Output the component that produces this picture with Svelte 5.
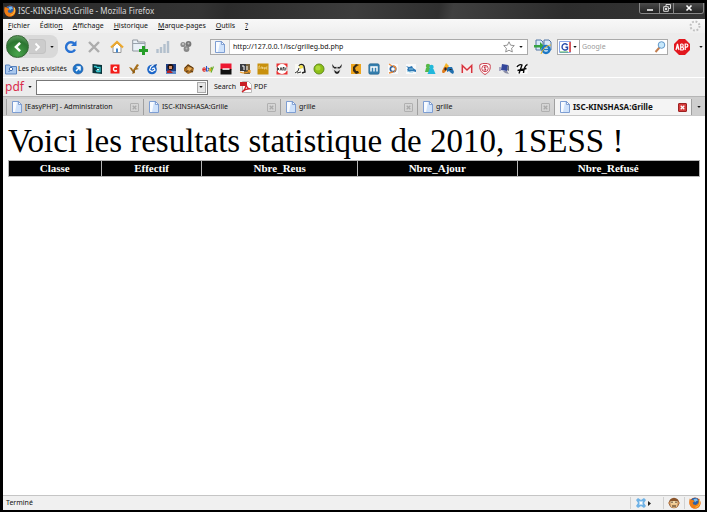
<script>
    let address = $state("http://127.0.0.1/isc/grilleg.bd.php");
    let query = $state("");
    let pdfQuery = $state("");
    let active = $state(4);

    const menus = [
        { key: "F", rest: "ichier" },
        { before: "Éditio", key: "n", rest: "" },
        { key: "A", rest: "ffichage" },
        { key: "H", rest: "istorique" },
        { key: "M", rest: "arque-pages" },
        { key: "O", rest: "utils" },
        { key: "?", rest: "" }
    ];

    const tabs = [
        "[EasyPHP] - Administration",
        "ISC-KINSHASA:Grille",
        "grille",
        "grille",
        "ISC-KINSHASA:Grille"
    ];

    const columns = [
        { name: "Classe", width: 13.4 },
        { name: "Effectif", width: 14.6 },
        { name: "Nbre_Reus", width: 22.5 },
        { name: "Nbre_Ajour", width: 23.1 },
        { name: "Nbre_Refusé", width: 26.4 }
    ];

    const bookmarks = [
        "arrow", "teal", "c", "bird", "swirl", "portrait", "tiger", "ebay", "sg",
        "amazon", "fnac", "darty", "penguin", "lime", "mask", "phone", "m", "orbit",
        "fish", "msn", "gamepad", "gmail", "shield", "computer", "script"
    ];
</script>

{#snippet page()}
    <svg class="page" viewBox="0 0 10 12" aria-hidden="true">
        <path d="M.5.5h6l3 3v8h-9z" fill="#cfe2fb" stroke="#7e9ed2" />
        <path d="M1 1h4L3 11H1z" fill="#f8fbff" />
        <path d="M6.500.5v3h3z" fill="#fff" stroke="#6d8fc9" stroke-width=".8" />
    </svg>
{/snippet}

{#snippet caret()}
    <svg class="caret" viewBox="0 0 5 3" aria-hidden="true"><path d="M0 0h5L2.5 3z" fill="#111" /></svg>
{/snippet}

{#snippet firefox()}
    <svg class="fox" viewBox="0 0 12 12" aria-hidden="true">
        <circle cx="6" cy="6" r="5.5" fill="#d9560f" />
        <circle cx="6" cy="4.6" r="3.9" fill="#2d62a8" />
        <path d="M4.500 2.200l3-.8 1.500 2-2 .8-1 1.200z" fill="#7fbdea" />
        <path d="M.8 1.500l1.500 1.600 2-.2 1 1.700-1.600 1.200.7 1.700 2.500.6 2.500-2L10 1.500C13 7 10.800 11.500 6 11.500 1.500 11.500-.8 6.500.8 1.500z" fill="#ee7d16" />
        <path d="M10.300 3c1.200 3-.3 6.500-3.800 7.200" fill="none" stroke="#ffd04a" />
    </svg>
{/snippet}

{#snippet bookmark(name)}
    <svg class="favicon" viewBox="0 0 12 12" aria-hidden="true">
        {#if name == "arrow"}
            <circle cx="6" cy="6" r="5" fill="#1e75c9" stroke="#1b4f9a" stroke-width=".6" />
            <path d="M4 8l3.500-3.500M4.500 4H8v3.500" fill="none" stroke="#fff" stroke-width="1.5" />
        {:else if name == "teal"}
            <path d="M1.500 1l9.500 1v9l-9.500-1z" fill="#08333a" />
            <path d="M3 3.500h2l1 1h3v4H6l-1-1.500" fill="none" stroke="#35c6d0" stroke-width="1.300" />
            <path d="M6 6h2v1.500H6z" fill="#d9fbfb" />
        {:else if name == "c"}
            <path d="M1.500 1.500h9v9h-9z" fill="#f21b18" />
            <path d="M8 4.500C6 3.500 4.500 4.200 4.500 6S6 8.500 8 7.500" fill="none" stroke="#fff" stroke-width="1.400" />
        {:else if name == "bird"}
            <path d="M1 4l3 1 1 2 4-6 2 1-2 3 2 1-4 1v3l-3 1 1-2-2-2z" fill="#a66f1c" />
            <path d="M3 6l2 3 3-3-3 4z" fill="#5c3c15" />
        {:else if name == "swirl"}
            <circle cx="6" cy="6.500" r="4.800" fill="#1c66c8" />
            <path d="M9.500 1L5 3.500 3.500 7 6 8.500 9 7 8 5 6 6" fill="none" stroke="#fff" stroke-width="1.100" />
            <path d="M7 2l4-1-1 3z" fill="#1550a5" />
        {:else if name == "portrait"}
            <path d="M1 1h10v10H1z" fill="#1d3f86" />
            <path d="M1 8h10v3H1z" fill="#5f8bc9" />
            <circle cx="5.500" cy="4" r="3" fill="#23120c" />
            <path d="M4 3h3v3H4z" fill="#d38b65" />
            <path d="M2 8l3-1 3 3H2z" fill="#b52223" />
        {:else if name == "tiger"}
            <path d="M1 5l4-4 6 4-1 4-5 2-4-3z" fill="#a46a22" />
            <path d="M2 5l3-3 5 3M3 9l3-2 4 2" fill="none" stroke="#4f3519" />
            <path d="M5 4l4 1-2 3-3-1z" fill="#e5ac57" />
        {:else if name == "ebay"}
            <path d="M.8 6.500h2.500C3.300 4 .8 4.500.8 6.500c0 2 2 2 2.800 1" fill="none" stroke="#e12a25" stroke-width="1.100" />
            <path d="M4.500 3v5h1c2 0 2-3 0-3" fill="none" stroke="#2556c6" stroke-width="1.100" />
            <path d="M7 5.500h1.500V8H7V6.500" fill="none" stroke="#e1ad10" />
            <path d="M9 4l1 3 1.500-3.500M10 7L9 9.500" fill="none" stroke="#69ab25" stroke-width="1.200" />
        {:else if name == "sg"}
            <path d="M.5.5h11v6H.5z" fill="#ec1731" />
            <path d="M.5 6h11v5.500H.5z" fill="#111" />
            <path d="M2.500 5.300h7v1.500h-7z" fill="#fff" />
        {:else if name == "amazon"}
            <path d="M1 1h6v7H1z" fill="#393b40" />
            <path d="M7 1h4v10H5V8h2z" fill="#77633e" />
            <path d="M3 3h2v4M8 3v4" fill="none" stroke="#fff" />
            <path d="M1 9c4 2 7 1 10-1M9 7.500h2V10" fill="none" stroke="#ef9720" stroke-width="1.200" />
        {:else if name == "fnac"}
            <path d="M.5.5h11v11H.5z" fill="#c8900d" />
            <path d="M2 6V3h1M4 6V4h1.500v2M7 4v2h1V4M10.500 4H9.200v2h1.300" fill="none" stroke="#f7e3a5" stroke-width=".7" />
        {:else if name == "darty"}
            <path d="M.5.5h11v11H.5z" fill="#eb3030" />
            <circle cx="6" cy="6" r="5" fill="#fff" />
            <path d="M.5 4h11v4H.5z" fill="#fff" />
            <path d="M1.500 4.500v3L3 6 1.500 4.500M4 7.500l1-3 1 3M7 7.500v-3h1V6l.5 1.500M9 4.500l.8 1 .8-1M9.800 5.500v2" fill="none" stroke="#161616" stroke-width=".8" />
        {:else if name == "penguin"}
            <path d="M1 1h10v10H1z" fill="#f8f8f4" />
            <path d="M5 3c1-2 4-2 5 0l1 6-3 1" fill="none" stroke="#222" stroke-width="1.500" />
            <path d="M5 3l2-1 2 1v2L6 6z" fill="#f5e44d" />
            <path d="M1 10l3-2 1-3M3 10l4-1" fill="none" stroke="#333" />
        {:else if name == "lime"}
            <circle cx="6" cy="6" r="5" fill="#8dbf18" stroke="#608b1c" />
            <circle cx="5" cy="5" r="2.500" fill="#add93a" />
        {:else if name == "mask"}
            <path d="M1 1l2 2h6l2-2-1 6-3 4H5L1 7z" fill="#ddd" />
            <path d="M1 1l2.500 3L2 5zM11 1L8.500 4 10 5zM3 4h2.500v1.500H3zM6.500 4H9v1.500H6.500zM3 7l3 2 3-2-1 3-2 1-2-1z" fill="#222" />
        {:else if name == "phone"}
            <path d="M1 1h10v10H1z" fill="#eda51e" />
            <path d="M9 2L6 1 3 4v4l3 3 3-1-1-2H6L5 5l2-2z" fill="#372a17" />
        {:else if name == "m"}
            <rect x=".8" y=".8" width="10.400" height="10.400" rx="1.500" fill="#357fae" stroke="#205e87" stroke-width=".6" />
            <path d="M3 8.500V4h6v4.500M6 4v4.500" fill="none" stroke="#fff" stroke-width="1.400" />
        {:else if name == "orbit"}
            <path d="M1 1h10v10H1z" fill="#fafafa" />
            <circle cx="6" cy="6" r="2.700" fill="#fff" stroke="#285f9e" stroke-width="1.700" />
            <path d="M2 1l3 2M2 10l4-1M6 3c3 0 4 4 1 6" fill="none" stroke="#ee8a37" stroke-width="1.300" />
        {:else if name == "fish"}
            <path d="M1 1h10v10H1z" fill="#fafafa" />
            <path d="M1 3l3 1 3-1 1 2 3 2v2L7 8 4 9 2 7l1-2z" fill="#2b76b3" />
            <path d="M4 6h4M2 8l3 1h3" fill="none" stroke="#8cc7e2" />
        {:else if name == "msn"}
            <circle cx="4" cy="3" r="2.200" fill="#58b947" />
            <path d="M1 9l1-4h4l1 4z" fill="#55b94a" />
            <circle cx="7.500" cy="4" r="2.200" fill="#22b9da" />
            <path d="M3.500 11l2-5h4l2 5z" fill="#21b7dc" />
        {:else if name == "gamepad"}
            <path d="M4 0l3 3-2 3-3-2z" fill="#f6b424" />
            <path d="M0 8l2-4h5l1 4-3-1-3 3H.5z" fill="#e07a18" />
            <path d="M5 6l1-2h4l2 5-1 2-2-1-2-2-2 1z" fill="#216fae" />
            <path d="M2 6h3M3.500 4.500v3M7.500 6.500h2" stroke="#242424" stroke-width="1.200" />
        {:else if name == "gmail"}
            <path d="M1 2h10v8H1z" fill="#f8eded" />
            <path d="M1.300 10V2.500L6 7l4.700-4.500V10" fill="none" stroke="#d8333d" stroke-width="1.500" />
        {:else if name == "shield"}
            <path d="M1 1.500C4 0 8 0 11 1.500c1 5-1 8-5 10C2 9.500 0 6 1 1.500z" fill="#fff" stroke="#c93b49" />
            <circle cx="6" cy="5.500" r="3.200" fill="none" stroke="#d04553" />
            <path d="M7.500 4H5l2 3H4.500" fill="none" stroke="#bc2638" />
        {:else if name == "computer"}
            <path d="M4 1l6 1-1 6-6-1z" fill="#33469b" />
            <path d="M5 8l4 0 2 3-4-1z" fill="#8a8da5" />
            <path d="M10 2l1 1v5L9 7z" fill="#6a7080" />
            <path d="M1 4h2v4H1z" fill="#aaa9c2" />
        {:else}
            <path d="M.5 1h11v10H.5z" fill="#fafafa" />
            <path d="M1 4c1-2 4-3 5-2L3 10.500M11.500 1.500C9 2 7.500 7 7.500 10M1.500 7.500l9-2" fill="none" stroke="#080808" stroke-width="1.400" />
        {/if}
    </svg>
{/snippet}

<div class="window">
    <header class="titlebar">
        {@render firefox()}
        <span class="title">ISC-KINSHASA:Grille - Mozilla Firefox</span>
        <div class="controls">
            <button class="minimize" aria-label="Réduire"><svg viewBox="0 0 8 8"><path d="M1 6h6" stroke="#fff" stroke-width="1.600" /></svg></button>
            <button aria-label="Restaurer"><svg viewBox="0 0 8 8"><path d="M3 2.500v-2h4.500v4h-2M.7 2.700h4.600v4.600H.7z" fill="none" stroke="#ddd" /><path d="M2 4h2v2H2z" fill="#ddd" /></svg></button>
            <button class="close" aria-label="Fermer"><svg viewBox="0 0 8 8"><path d="M1.500 1.500l5 5M6.500 1.500l-5 5" stroke="#fff" stroke-width="1.600" /></svg></button>
        </div>
    </header>

    <nav class="menubar">
        {#each menus as menu}
            <button>{menu.before ?? ""}<u>{menu.key}</u>{menu.rest}</button>
        {/each}
        <svg class="throbber" viewBox="0 0 12 12" aria-hidden="true">
            <circle cx="6" cy="6" r="4.500" fill="none" stroke="#bfbfbf" stroke-width="2" stroke-dasharray="1.800 1.734" />
        </svg>
    </nav>

    <div class="toolbar">
        <div class="history">
            <button class="back" aria-label="Précédent"><svg viewBox="0 0 10 10"><path d="M6.500 2L3.500 5l3 3" fill="none" stroke="#fff" stroke-width="1.800" /></svg></button>
            <button class="forward" aria-label="Suivant"><svg viewBox="0 0 10 10"><path d="M3.500 1.500L7 5 3.500 8.500" fill="none" stroke="#fff" stroke-width="1.800" /></svg></button>
            <button class="drop" aria-label="Historique récent">{@render caret()}</button>
        </div>
        <div class="actions">
            <button aria-label="Actualiser"><svg viewBox="0 0 16 16"><path d="M12 10.500A4.800 4.800 0 1 1 11.500 5" fill="none" stroke="#2872d3" stroke-width="2.400" /><path d="M13.500 1.500V7H8z" fill="#2872d3" /></svg></button>
            <button aria-label="Arrêter"><svg viewBox="0 0 16 16"><path d="M3 3l10 10M13 3L3 13" stroke="#acacac" stroke-width="2.400" /></svg></button>
            <button aria-label="Accueil"><svg viewBox="0 0 16 16"><path d="M4 8v5.500h8V8L8 4z" fill="#fff" stroke="#999" /><path d="M2 8.500l6-5.500 6 5.500" fill="none" stroke="#eda92e" stroke-width="2.200" /><path d="M7 9.500h2v4H7z" fill="#4487cb" /></svg></button>
            <button aria-label="Nouvel onglet"><svg viewBox="0 0 16 16"><path d="M.7 3V1h5v2H13v9H.7z" fill="#e9f1f7" stroke="#9198a0" /><path d="M1 4.500h12" stroke="#9aa3ad" /><path d="M11.500 7v9M7 11.500h9" stroke="#269d28" stroke-width="3" /></svg></button>
            <button aria-label="Signal"><svg viewBox="0 0 16 16"><path d="M2.500 14v-4M6 14V8M9.500 14V5M13 14V2" stroke="#b3c0cd" stroke-width="2.400" /></svg></button>
            <button aria-label="Modules"><svg viewBox="0 0 16 16"><circle cx="5" cy="5.500" r="2.600" fill="#8d8d8d" /><circle cx="10.500" cy="5" r="2.900" fill="#777" /><circle cx="8.500" cy="10" r="2.900" fill="#888" /><circle cx="5" cy="5" r="1" fill="#ccc" /><circle cx="10.500" cy="4.500" r="1" fill="#bbb" /><circle cx="8.500" cy="9.500" r="1" fill="#bbb" /></svg></button>
        </div>
        <div class="address">
            <span class="identity">{@render page()}</span>
            <input bind:value={address} type="text" aria-label="Adresse">
            <button aria-label="Marquer cette page"><svg class="star" viewBox="0 0 12 12"><path d="M6 .8l1.600 3.400 3.700.4-2.700 2.600.7 3.800L6 9.200 2.700 11l.7-3.800L.7 4.600l3.700-.4z" fill="#fff" stroke="#888" stroke-width=".9" /></svg></button>
            <button class="drop" aria-label="Adresses récentes">{@render caret()}</button>
        </div>
        <button class="ietab" aria-label="IE Tab"><svg viewBox="0 0 18 16"><path d="M2 1h5l2 2v8H2zM10 1h5l2 2v8h-7z" fill="#d9e9fa" stroke="#5277a4" /><path d="M0 6h6V3l4 4-4 4V8.500H0z" fill="#36a343" /><circle cx="12" cy="10.500" r="3.500" fill="#e6f2fb" stroke="#1d78c6" stroke-width="2.400" /><path d="M9 10.500h6" stroke="#1d78c6" stroke-width="1.500" /><path d="M7 15c2-6 7-9 10-9" fill="none" stroke="#e9b623" /></svg></button>
        <div class="search">
            <button class="engine" aria-label="Moteur de recherche"><svg viewBox="0 0 12 12"><path d="M.5.5h11v11H.5z" fill="#fff" stroke="#8aa6e8" /><path d="M11 1v10" stroke="#e83b2e" stroke-width="1.500" /><path d="M1 11h8" stroke="#4fb25a" /><path d="M8.500 4C6.500 1.500 3 3 3 6s3.500 4 5.500 2V6.300h-2" fill="none" stroke="#2549a9" stroke-width="1.400" /></svg>{@render caret()}</button>
            <input bind:value={query} type="text" placeholder="Google" aria-label="Recherche">
            <button aria-label="Rechercher"><svg viewBox="0 0 12 12"><path d="M5.500 6.500L1.500 11" stroke="#c27d4f" stroke-width="2" /><circle cx="7.500" cy="4" r="3.300" fill="#c7e8fb" stroke="#6298ca" /></svg></button>
        </div>
        <button class="abp" aria-label="Adblock Plus"><svg viewBox="0 0 16 16"><path d="M5 0h6l5 5v6l-5 5H5l-5-5V5z" fill="#e2171e" /><path d="M2 11l1.500-6L5 11M2.500 9h2M6.700 5v6h1.500c2 0 1.500-2.900 0-2.900H7M7 8h1c1.600 0 1.600-3 0-3H6.700M11.200 11V5h1c2.300 0 2.300 3.200 0 3.200h-1" fill="none" stroke="#fff" stroke-width="1.200" /></svg></button>
        <button class="drop last" aria-label="Options Adblock Plus">{@render caret()}</button>
    </div>

    <div class="bookmarks">
        <a class="visited" href="#visites"><svg class="favicon" viewBox="0 0 12 12" aria-hidden="true"><path d="M.5 2h4l1 1.500h6V11H.5z" fill="#a9c8ee" stroke="#5681bd" /><circle cx="6" cy="6" r="1.700" fill="#fff" stroke="#3f6caf" /><path d="M5 7.500L3.500 9" stroke="#3f6caf" /></svg>Les plus visités</a>
        <div class="favicons">
            {#each bookmarks as name}
                <a href="#{name}" aria-label={name}>{@render bookmark(name)}</a>
            {/each}
        </div>
    </div>

    <div class="pdfbar">
        <button class="pdf">pdf</button>
        <button class="drop" aria-label="Options pdf">{@render caret()}</button>
        <div class="combo">
            <input bind:value={pdfQuery} type="text" aria-label="Recherche pdf">
            <button aria-label="Recherches récentes">{@render caret()}</button>
        </div>
        <button>Search</button>
        <button class="convert"><svg viewBox="0 0 12 12" aria-hidden="true"><path d="M2.500.5h6l3 3v8h-9z" fill="#fff" stroke="#bbb" /><path d="M0 1h7v4H0z" fill="#c81f25" /><path d="M2 11c3-2 4-5 4-8 1 4 2 5 5 5-3-.5-6 0-9 3z" fill="none" stroke="#cf2027" stroke-width="1.200" /></svg>PDF</button>
    </div>

    <div class="tabs">
        {#each tabs as tab, i}
            <div class="tab" class:active={active == i}>
                <button class="label" onclick={() => active = i}>{@render page()}<span>{tab}</span></button>
                <button class="closetab" aria-label="Fermer l'onglet"><svg viewBox="0 0 10 10"><path d="M3 3l4 4M7 3L3 7" stroke="currentColor" stroke-width="1.400" /></svg></button>
            </div>
        {/each}
        <button class="alltabs" aria-label="Liste des onglets">{@render caret()}</button>
    </div>

    <main>
        <p>Voici les resultats statistique de 2010, 1SESS !</p>
        <table>
            <thead>
                <tr>
                    {#each columns as column}
                        <th style="width: {column.width}%">{column.name}</th>
                    {/each}
                </tr>
            </thead>
        </table>
    </main>

    <footer>
        <span>Terminé</span>
        <div class="panel">
            <svg viewBox="0 0 12 12" aria-hidden="true"><path d="M3 1l3 2 3-2 2 2-2 3 2 3-2 2-3-2-3 2-2-2 2-3-2-3z" fill="#6fb2e6" /><path d="M4.500 4.500l3 3M7.500 4.500l-3 3" stroke="#fff" stroke-width="1.500" /></svg>
            <svg class="side" viewBox="0 0 3 5" aria-hidden="true"><path d="M0 0v5l3-2.500z" fill="#222" /></svg>
        </div>
        <div class="panel">
            <svg viewBox="0 0 12 12" aria-hidden="true"><circle cx="6" cy="6" r="5.200" fill="#8b552b" /><circle cx="1.500" cy="6" r="1.200" fill="#c28652" /><circle cx="10.500" cy="6" r="1.200" fill="#c28652" /><ellipse cx="6" cy="7.500" rx="3.700" ry="3.300" fill="#efc58c" /><path d="M2.500 4h7v2.500h-7z" fill="#f2d8a9" /><path d="M4 4.500V6M8 4.500V6M4 9h4" stroke="#382719" /></svg>
        </div>
        <div class="panel">{@render firefox()}</div>
    </footer>
</div>

<style>
    :global(body) {
        margin: 0;
    }

    .window {
        box-sizing: border-box;
        min-height: 100vh;
        display: flex;
        flex-direction: column;
        border: solid #000;
        border-width: 3px 2px 2px 3px;
        background: #ececec;
        font-family: "Noto Sans", "Open Sans", sans-serif;
        font-size: 7px;
        line-height: 10px;
        color: #111;
    }

    button {
        display: flex;
        align-items: center;
        justify-content: center;
        padding: 0;
        border: 0;
        background: none;
        font: inherit;
        color: inherit;
        white-space: nowrap;
    }

    input {
        flex: 1;
        min-width: 0;
        padding: 0;
        border: 0;
        outline: none;
        background: none;
        font: inherit;
        color: inherit;
    }

    svg {
        display: block;
        flex: none;
        width: 12px;
        height: 12px;
    }

    .page {
        width: 10px;
        height: 12px;
    }

    .caret {
        width: 4px;
        height: 2px;
    }

    .titlebar {
        display: flex;
        align-items: center;
        height: 16px;
        padding-left: 1px;
        background: linear-gradient(100deg, #292929 0%, #343434 28%, #2c2c2c 32%, #3d3d3d 50%, #303030 62%, #404040 64%, #2d2d2d 80%, #353535 100%);
        color: #d8d8d8;
    }

    .title {
        flex: 1;
        margin-left: 2px;
        font-size: 8px;
    }

    .controls {
        display: flex;
        align-self: flex-start;
        margin-right: 1px;
        border: 1px solid #888;
        border-top: 0;
        border-radius: 0 0 3px 3px;
        overflow: hidden;
    }

    .controls button {
        width: 14px;
        height: 10px;
        border-right: 1px solid #888;
        background: linear-gradient(#4b4b4b, #222);
    }

    .controls .minimize {
        width: 20px;
    }

    .controls .close {
        width: 29px;
        border-right: 0;
    }

    .controls svg {
        width: 8px;
        height: 8px;
    }

    .menubar {
        display: flex;
        align-items: center;
        gap: 10px;
        height: 14px;
        padding: 0 4px 0 5px;
        background: linear-gradient(#f8f8f8, #efefef);
    }

    .throbber {
        margin-left: auto;
    }

    .toolbar {
        display: flex;
        align-items: center;
        height: 27px;
        padding-left: 3px;
    }

    .history {
        display: flex;
        align-items: center;
        width: 52px;
        border-radius: 12px 8px 8px 12px;
        background: #d9d9d9;
    }

    .back {
        width: 23px;
        height: 23px;
        border: 1px solid #356534;
        border-radius: 50%;
        background: radial-gradient(circle at 50% 85%, #48a54b, #2c7631 60%, #76ad75);
    }

    .back svg {
        width: 14px;
        height: 14px;
    }

    .forward {
        width: 17px;
        height: 15px;
        border: 1px solid #c3c3c3;
        border-left: 0;
        border-radius: 0 4px 4px 0;
        background: #ccc;
    }

    .forward svg {
        width: 10px;
        height: 10px;
    }

    .drop {
        width: 12px;
        height: 14px;
    }

    .actions {
        display: flex;
        gap: 7px;
        margin-left: 5px;
    }

    .actions svg {
        width: 16px;
        height: 16px;
    }

    .address {
        flex: 1;
        display: flex;
        align-items: center;
        height: 14px;
        margin: 0 6px 0 16px;
        border: 1px solid #aaa;
        background: #fff;
    }

    .identity {
        display: flex;
        align-items: center;
        height: 14px;
        margin-right: 3px;
        padding: 0 4px;
        border-right: 1px solid #ccc;
        background: #f2f2f2;
    }

    .ietab svg {
        width: 18px;
        height: 16px;
    }

    .search {
        display: flex;
        align-items: center;
        gap: 2px;
        width: 108px;
        height: 14px;
        margin: 0 6px 0 5px;
        padding-right: 1px;
        border: 1px solid #aaa;
        background: #fff;
    }

    .search input::placeholder {
        color: #999;
        opacity: 1;
    }

    .engine {
        gap: 2px;
        height: 14px;
        padding: 0 2px 0 1px;
        border-right: 1px solid #aaa;
    }

    .abp svg {
        width: 16px;
        height: 16px;
    }

    .last {
        width: 8px;
        margin-left: 7px;
    }

    .bookmarks {
        display: flex;
        align-items: center;
        height: 17px;
        padding-left: 2px;
        border-bottom: 1px solid #fff;
    }

    .visited {
        display: flex;
        align-items: center;
        gap: 1px;
        width: 67px;
        color: inherit;
        text-decoration: none;
        white-space: nowrap;
    }

    .favicons {
        display: flex;
        justify-content: space-between;
        flex: 0 1 456px;
    }

    .pdfbar {
        display: flex;
        align-items: center;
        height: 18px;
        padding-left: 2px;
    }

    .pdf {
        font-size: 12px;
        color: #d92b4b;
    }

    .combo {
        display: flex;
        align-items: center;
        width: 170px;
        height: 13px;
        margin-right: 6px;
        border: 1px solid #777;
        background: #fff;
    }

    .combo button {
        width: 9px;
        height: 11px;
        margin: 1px;
        border: 1px solid #aaa;
        background: #e6e6e6;
    }

    .convert {
        gap: 2px;
        margin-left: 4px;
    }

    .tabs {
        display: flex;
        align-items: flex-end;
        height: 20px;
        box-sizing: border-box;
        padding-left: 3px;
        border-top: 1px solid #b5b5b5;
        border-bottom: 1px solid #c9c9c9;
        background: #cecece;
    }

    .tab {
        flex: 1;
        display: flex;
        align-items: center;
        min-width: 0;
        height: 16px;
        padding: 0 4px 0 5px;
        box-sizing: border-box;
        border-left: 1px solid #a0a0a0;
        background: linear-gradient(#d9d9d9, #cfcfcf);
    }

    .tab.active {
        background: #f4f4f4;
        border-right: 1px solid #a0a0a0;
        font-size: 8px;
        font-weight: bold;
    }

    .label {
        flex: 1;
        justify-content: flex-start;
        gap: 3px;
        min-width: 0;
    }

    .closetab {
        width: 9px;
        height: 9px;
        border: 1px solid #b0b0b0;
        border-radius: 1px;
        color: #aaa;
    }

    .active .closetab {
        border-color: #9c2222;
        background: #d43a3a;
        color: #fff;
    }

    .closetab svg {
        width: 9px;
        height: 9px;
    }

    .alltabs {
        width: 13px;
        height: 16px;
    }

    main {
        flex: 1;
        padding: 7px 5px 8px 5px;
        background: #fff;
        font-family: "Liberation Serif", serif;
        color: #000;
    }

    p {
        margin: 0;
        font-size: 33px;
        line-height: 37px;
    }

    table {
        width: 100%;
        border: 1px solid #999;
        border-collapse: collapse;
    }

    th {
        height: 15px;
        padding: 0;
        border: 1px solid #b5b5b5;
        background: #000;
        color: #fff;
        font-size: 11px;
        line-height: 15px;
    }

    footer {
        display: flex;
        align-items: center;
        height: 14px;
        padding-left: 3px;
        border-top: 1px solid #c5c5c5;
        background: #f0f0f0;
    }

    footer span {
        flex: 1;
    }

    .panel {
        display: flex;
        align-items: center;
        gap: 1px;
        padding: 0 4px;
        border-left: 1px solid #d0d0d0;
    }

    .panel:first-of-type {
        padding-right: 12px;
    }

    .side {
        width: 3px;
        height: 5px;
    }
</style>
